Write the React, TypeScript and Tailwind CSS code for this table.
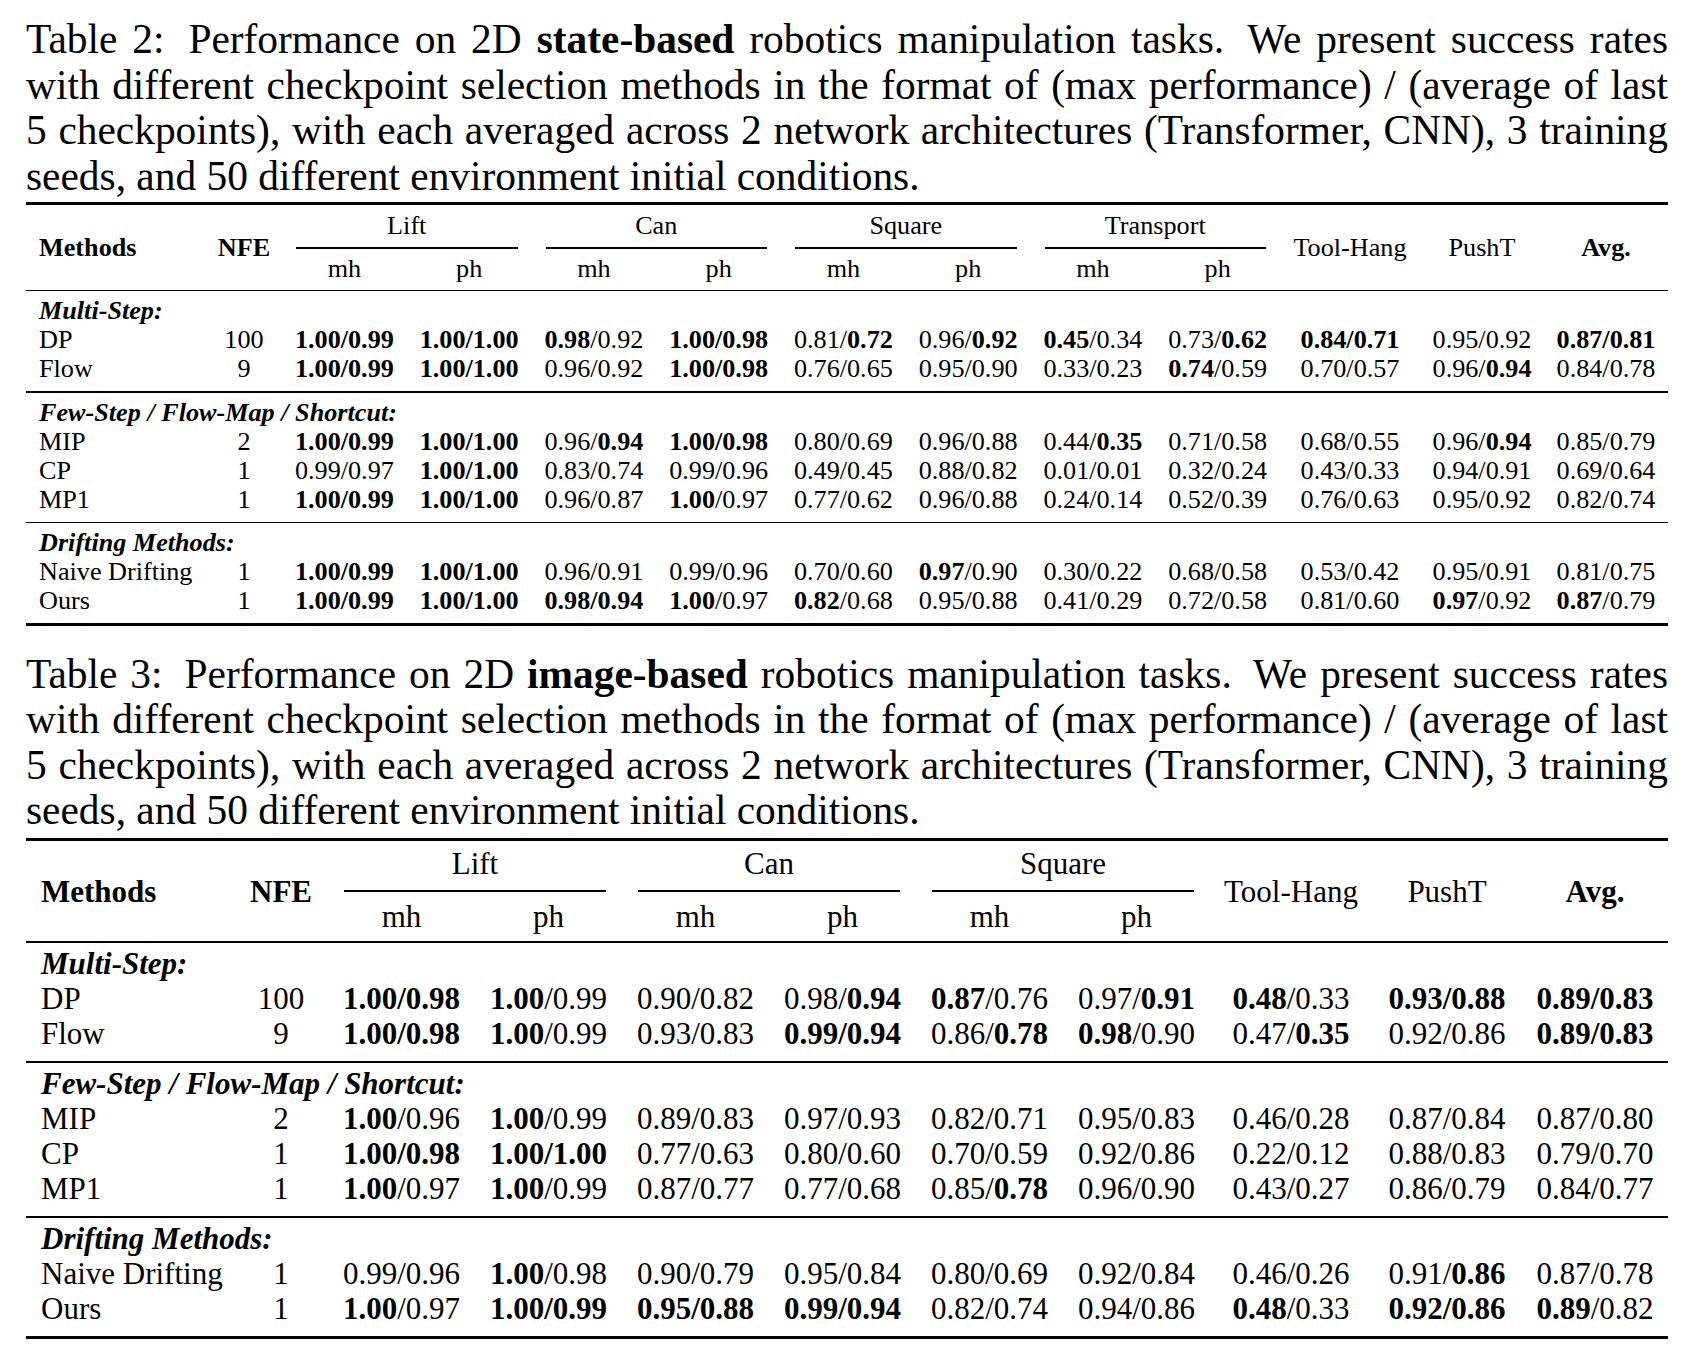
import React from "react";

function Val({ v }: { v: string }) {
  const parts = v.split("**");
  return (
    <>
      {parts.map((p, i) =>
        p === "" ? null : i % 2 ? (
          <b key={i} className="font-bold">
            {p}
          </b>
        ) : (
          <span key={i}>{p}</span>
        )
      )}
    </>
  );
}

type Row = { name: string; nfe: string; vals: string[] };
type Section = { label: string; rows: Row[] };

type Cfg = {
  grid: string;
  text: string;
  pl: string;
  headRows: string;
  groupPt: string;
  subPt: string;
  cmid: string;
  secPt: string;
  secPb: string;
  groups: string[];
  singles: string[];
  sections: Section[];
};

const t1: Cfg = {
  grid: "grid grid-cols-[180px_76px_repeat(8,124.75px)_140px_124px_124px]",
  text: "text-[26.2px] leading-[29px]",
  pl: "pl-[13px]",
  headRows: "grid-rows-[44.25px_41px]",
  groupPt: "pt-[6.5px]",
  subPt: "pt-[4.75px]",
  cmid: "mx-[14px]",
  secPt: "pt-[5px]",
  secPb: "pb-[8px]",
  groups: ["Lift", "Can", "Square", "Transport"],
  singles: ["Tool-Hang", "PushT"],
  sections: [
    {
      label: "Multi-Step:",
      rows: [
        {
          name: "DP",
          nfe: "100",
          vals: [
            "**1.00/0.99**",
            "**1.00/1.00**",
            "**0.98**/0.92",
            "**1.00/0.98**",
            "0.81/**0.72**",
            "0.96/**0.92**",
            "**0.45**/0.34",
            "0.73/**0.62**",
            "**0.84/0.71**",
            "0.95/0.92",
            "**0.87/0.81**",
          ],
        },
        {
          name: "Flow",
          nfe: "9",
          vals: [
            "**1.00/0.99**",
            "**1.00/1.00**",
            "0.96/0.92",
            "**1.00/0.98**",
            "0.76/0.65",
            "0.95/0.90",
            "0.33/0.23",
            "**0.74**/0.59",
            "0.70/0.57",
            "0.96/**0.94**",
            "0.84/0.78",
          ],
        },
      ],
    },
    {
      label: "Few-Step / Flow-Map / Shortcut:",
      rows: [
        {
          name: "MIP",
          nfe: "2",
          vals: [
            "**1.00/0.99**",
            "**1.00/1.00**",
            "0.96/**0.94**",
            "**1.00/0.98**",
            "0.80/0.69",
            "0.96/0.88",
            "0.44/**0.35**",
            "0.71/0.58",
            "0.68/0.55",
            "0.96/**0.94**",
            "0.85/0.79",
          ],
        },
        {
          name: "CP",
          nfe: "1",
          vals: [
            "0.99/0.97",
            "**1.00/1.00**",
            "0.83/0.74",
            "0.99/0.96",
            "0.49/0.45",
            "0.88/0.82",
            "0.01/0.01",
            "0.32/0.24",
            "0.43/0.33",
            "0.94/0.91",
            "0.69/0.64",
          ],
        },
        {
          name: "MP1",
          nfe: "1",
          vals: [
            "**1.00/0.99**",
            "**1.00/1.00**",
            "0.96/0.87",
            "**1.00**/0.97",
            "0.77/0.62",
            "0.96/0.88",
            "0.24/0.14",
            "0.52/0.39",
            "0.76/0.63",
            "0.95/0.92",
            "0.82/0.74",
          ],
        },
      ],
    },
    {
      label: "Drifting Methods:",
      rows: [
        {
          name: "Naive Drifting",
          nfe: "1",
          vals: [
            "**1.00/0.99**",
            "**1.00/1.00**",
            "0.96/0.91",
            "0.99/0.96",
            "0.70/0.60",
            "**0.97**/0.90",
            "0.30/0.22",
            "0.68/0.58",
            "0.53/0.42",
            "0.95/0.91",
            "0.81/0.75",
          ],
        },
        {
          name: "Ours",
          nfe: "1",
          vals: [
            "**1.00/0.99**",
            "**1.00/1.00**",
            "**0.98/0.94**",
            "**1.00**/0.97",
            "**0.82**/0.68",
            "0.95/0.88",
            "0.41/0.29",
            "0.72/0.58",
            "0.81/0.60",
            "**0.97**/0.92",
            "**0.87**/0.79",
          ],
        },
      ],
    },
  ],
};

const t2: Cfg = {
  grid: "grid grid-cols-[208px_94px_repeat(6,147px)_162px_150px_146px]",
  text: "text-[31px] leading-[35px]",
  pl: "pl-[15px]",
  headRows: "grid-rows-[50.25px_49.5px]",
  groupPt: "pt-[5px]",
  subPt: "pt-[7px]",
  cmid: "mx-[16px]",
  secPt: "pt-[3.5px]",
  secPb: "pb-[10px]",
  groups: ["Lift", "Can", "Square"],
  singles: ["Tool-Hang", "PushT"],
  sections: [
    {
      label: "Multi-Step:",
      rows: [
        {
          name: "DP",
          nfe: "100",
          vals: [
            "**1.00/0.98**",
            "**1.00**/0.99",
            "0.90/0.82",
            "0.98/**0.94**",
            "**0.87**/0.76",
            "0.97/**0.91**",
            "**0.48**/0.33",
            "**0.93/0.88**",
            "**0.89/0.83**",
          ],
        },
        {
          name: "Flow",
          nfe: "9",
          vals: [
            "**1.00/0.98**",
            "**1.00**/0.99",
            "0.93/0.83",
            "**0.99/0.94**",
            "0.86/**0.78**",
            "**0.98**/0.90",
            "0.47/**0.35**",
            "0.92/0.86",
            "**0.89/0.83**",
          ],
        },
      ],
    },
    {
      label: "Few-Step / Flow-Map / Shortcut:",
      rows: [
        {
          name: "MIP",
          nfe: "2",
          vals: [
            "**1.00**/0.96",
            "**1.00**/0.99",
            "0.89/0.83",
            "0.97/0.93",
            "0.82/0.71",
            "0.95/0.83",
            "0.46/0.28",
            "0.87/0.84",
            "0.87/0.80",
          ],
        },
        {
          name: "CP",
          nfe: "1",
          vals: [
            "**1.00/0.98**",
            "**1.00/1.00**",
            "0.77/0.63",
            "0.80/0.60",
            "0.70/0.59",
            "0.92/0.86",
            "0.22/0.12",
            "0.88/0.83",
            "0.79/0.70",
          ],
        },
        {
          name: "MP1",
          nfe: "1",
          vals: [
            "**1.00**/0.97",
            "**1.00**/0.99",
            "0.87/0.77",
            "0.77/0.68",
            "0.85/**0.78**",
            "0.96/0.90",
            "0.43/0.27",
            "0.86/0.79",
            "0.84/0.77",
          ],
        },
      ],
    },
    {
      label: "Drifting Methods:",
      rows: [
        {
          name: "Naive Drifting",
          nfe: "1",
          vals: [
            "0.99/0.96",
            "**1.00**/0.98",
            "0.90/0.79",
            "0.95/0.84",
            "0.80/0.69",
            "0.92/0.84",
            "0.46/0.26",
            "0.91/**0.86**",
            "0.87/0.78",
          ],
        },
        {
          name: "Ours",
          nfe: "1",
          vals: [
            "**1.00**/0.97",
            "**1.00/0.99**",
            "**0.95/0.88**",
            "**0.99/0.94**",
            "0.82/0.74",
            "0.94/0.86",
            "**0.48**/0.33",
            "**0.92/0.86**",
            "**0.89**/0.82",
          ],
        },
      ],
    },
  ],
};

function Thick() {
  return <div className="h-[3px] bg-black" />;
}
function Thin() {
  return <div className="h-[1.5px] bg-black" />;
}

function Table({ c }: { c: Cfg }) {
  return (
    <div className={c.text}>
      <Thick />
      <div className={`${c.grid} ${c.headRows}`}>
        <div className={`row-span-2 flex items-center font-bold ${c.pl}`}>Methods</div>
        <div className="row-span-2 flex items-center justify-center font-bold">NFE</div>
        {c.groups.map((g) => (
          <div key={g} className="col-span-2 flex flex-col">
            <div className={`text-center ${c.groupPt}`}>{g}</div>
            <div className={`mt-auto h-[1.5px] bg-black ${c.cmid}`} />
          </div>
        ))}
        {c.singles.map((s) => (
          <div key={s} className="row-span-2 flex items-center justify-center">
            {s}
          </div>
        ))}
        <div className="row-span-2 flex items-center justify-center font-bold">Avg.</div>
        {c.groups.map((g) => (
          <React.Fragment key={g + "sub"}>
            <div className={`text-center ${c.subPt}`}>mh</div>
            <div className={`text-center ${c.subPt}`}>ph</div>
          </React.Fragment>
        ))}
      </div>
      {c.sections.map((s) => (
        <React.Fragment key={s.label}>
          <Thin />
          <div className={`${c.secPt} ${c.secPb}`}>
            <div className={`font-bold italic ${c.pl}`}>{s.label}</div>
            {s.rows.map((r) => (
              <div key={r.name} className={c.grid}>
                <div className={`whitespace-nowrap ${c.pl}`}>{r.name}</div>
                <div className="text-center">{r.nfe}</div>
                {r.vals.map((v, i) => (
                  <div key={i} className="text-center whitespace-nowrap">
                    <Val v={v} />
                  </div>
                ))}
              </div>
            ))}
          </div>
        </React.Fragment>
      ))}
      <Thick />
    </div>
  );
}

function Gap() {
  return <span className="inline-block w-[9px]" />;
}

function Caption({ lines }: { lines: React.ReactNode[] }) {
  return (
    <div className="text-[41.4px] leading-[45.5px]">
      {lines.map((l, i) =>
        i < lines.length - 1 ? (
          <div key={i} className="text-justify [text-align-last:justify] whitespace-nowrap">
            {l}
          </div>
        ) : (
          <div key={i} className="text-left whitespace-nowrap">
            {l}
          </div>
        )
      )}
    </div>
  );
}

const rest = [
  "with different checkpoint selection methods in the format of (max performance) / (average of last",
  "5 checkpoints), with each averaged across 2 network architectures (Transformer, CNN), 3 training",
  "seeds, and 50 different environment initial conditions.",
];

export default function App() {
  return (
    <div className="w-[1700px] h-[1353px] bg-white text-black font-['Liberation_Serif','Times_New_Roman',serif] pl-[26px] pt-[17px]">
      <div className="w-[1642px]">
        <Caption
          lines={[
            <>
              Table 2:
              <Gap /> Performance on 2D <b className="font-bold">state-based</b> robotics manipulation tasks.
              <Gap /> We present success rates
            </>,
            ...rest,
          ]}
        />
        <div className="mt-[2.5px]">
          <Table c={t1} />
        </div>
        <div className="mt-[25.5px]">
          <Caption
            lines={[
              <>
                Table 3:
                <Gap /> Performance on 2D <b className="font-bold">image-based</b> robotics manipulation tasks.
                <Gap /> We present success rates
              </>,
              ...rest,
            ]}
          />
        </div>
        <div className="mt-[4.5px]">
          <Table c={t2} />
        </div>
      </div>
    </div>
  );
}
